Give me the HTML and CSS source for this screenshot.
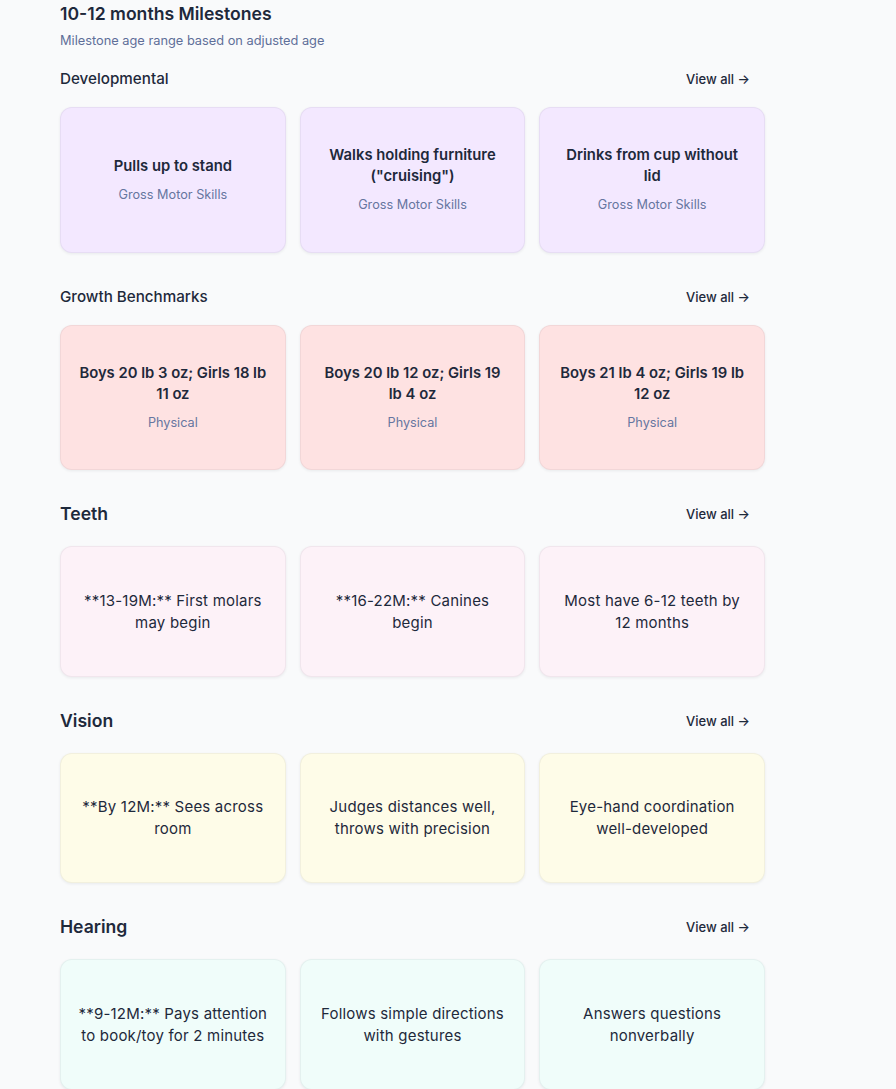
FILE: index.html
```html
<!DOCTYPE html>
<html lang="en">
<head>
<meta charset="utf-8">
<title>10-12 months Milestones</title>
<link rel="stylesheet" href="styles.css">
</head>
<body>
<main class="page">
  <header class="page-head">
    <h1 class="page-title">10-12 months Milestones</h1>
    <p class="page-sub">Milestone age range based on adjusted age</p>
  </header>

  <section class="section">
    <div class="section-head">
      <h2 class="section-title">Developmental</h2>
      <a class="view-all" href="#">View all →</a>
    </div>
    <div class="cards">
      <div class="card card-dev tall"><div class="card-title">Pulls up to stand</div><div class="card-sub">Gross Motor Skills</div></div>
      <div class="card card-dev tall"><div class="card-title">Walks holding furniture ("cruising")</div><div class="card-sub">Gross Motor Skills</div></div>
      <div class="card card-dev tall"><div class="card-title">Drinks from cup without lid</div><div class="card-sub">Gross Motor Skills</div></div>
    </div>
  </section>

  <section class="section">
    <div class="section-head">
      <h2 class="section-title">Growth Benchmarks</h2>
      <a class="view-all" href="#">View all →</a>
    </div>
    <div class="cards">
      <div class="card card-growth tall2"><div class="card-title">Boys 20 lb 3 oz; Girls 18 lb 11 oz</div><div class="card-sub">Physical</div></div>
      <div class="card card-growth tall2"><div class="card-title">Boys 20 lb 12 oz; Girls 19 lb 4 oz</div><div class="card-sub">Physical</div></div>
      <div class="card card-growth tall2"><div class="card-title">Boys 21 lb 4 oz; Girls 19 lb 12 oz</div><div class="card-sub">Physical</div></div>
    </div>
  </section>

  <section class="section">
    <div class="section-head big">
      <h2 class="section-title">Teeth</h2>
      <a class="view-all" href="#">View all →</a>
    </div>
    <div class="cards">
      <div class="card card-teeth short"><div class="card-text">**13-19M:** First molars may begin</div></div>
      <div class="card card-teeth short"><div class="card-text">**16-22M:** Canines begin</div></div>
      <div class="card card-teeth short"><div class="card-text">Most have 6-12 teeth by 12 months</div></div>
    </div>
  </section>

  <section class="section">
    <div class="section-head big">
      <h2 class="section-title">Vision</h2>
      <a class="view-all" href="#">View all →</a>
    </div>
    <div class="cards">
      <div class="card card-vision short"><div class="card-text">**By 12M:** Sees across room</div></div>
      <div class="card card-vision short"><div class="card-text">Judges distances well, throws with precision</div></div>
      <div class="card card-vision short"><div class="card-text">Eye-hand coordination well-developed</div></div>
    </div>
  </section>

  <section class="section">
    <div class="section-head big">
      <h2 class="section-title">Hearing</h2>
      <a class="view-all" href="#">View all →</a>
    </div>
    <div class="cards">
      <div class="card card-hearing short"><div class="card-text">**9-12M:** Pays attention to book/toy for 2 minutes</div></div>
      <div class="card card-hearing short"><div class="card-text">Follows simple directions with gestures</div></div>
      <div class="card card-hearing short"><div class="card-text">Answers questions nonverbally</div></div>
    </div>
  </section>
</main>
</body>
</html>
```

FILE: styles.css
```css
* { box-sizing: border-box; }

html, body {
  margin: 0;
  padding: 0;
  background: #f9fafb;
}

body {
  font-family: Inter, "Noto Sans", "Liberation Sans", sans-serif;
  color: #1e293b;
}

.page {
  width: 705px;
  margin-left: 60px;
  padding-top: 2px;
}

.page-title {
  margin: 0;
  font-size: 17.6px;
  line-height: 24px;
  font-weight: 600;
  color: #1e293b;
}

.page-sub {
  margin: 6px 0 0;
  font-size: 12.8px;
  line-height: 18px;
  color: #5f6f99;
}

.section { margin-top: 32px; }
.page-head + .section { margin-top: 17px; }

.section-head {
  display: flex;
  justify-content: space-between;
  align-items: center;
  height: 24px;
  margin-bottom: 16px;
  padding-right: 15px;
}

.section-head.big { margin-bottom: 20px; }

.section-title {
  margin: 0;
  font-size: 15.2px;
  line-height: 24px;
  font-weight: 500;
  color: #1e293b;
}

.section-head.big .section-title {
  font-size: 17.6px;
  font-weight: 600;
}

.view-all {
  font-size: 13px;
  font-weight: 500;
  color: #1e293b;
  text-decoration: none;
}

.cards {
  display: grid;
  grid-template-columns: repeat(3, 1fr);
  gap: 14px;
}

.card {
  border-radius: 12px;
  border: 1px solid rgba(15, 23, 42, 0.05);
  box-shadow: 0 1px 3px rgba(15, 23, 42, 0.07);
  display: flex;
  flex-direction: column;
  align-items: center;
  justify-content: center;
  text-align: center;
  padding: 0 16px;
}

.card.tall { height: 146px; }
.card.tall2 { height: 145px; }
.card.short { height: 131px; }
.card-vision.short { height: 130px; }

.card-dev { background: #f3e8ff; }
.card-growth { background: #fee2e2; }
.card-teeth { background: #fdf2f8; }
.card-vision { background: #fefce8; }
.card-hearing { background: #f0fdfa; }

.card-title {
  font-size: 14.8px;
  line-height: 21px;
  font-weight: 600;
  color: #1e293b;
}

.card-sub {
  margin-top: 8px;
  font-size: 12.7px;
  line-height: 20px;
  color: #6676a0;
}

.card-text {
  font-size: 15px;
  line-height: 22px;
  font-weight: 400;
  letter-spacing: 0.2px;
  color: #1e293b;
}
```
